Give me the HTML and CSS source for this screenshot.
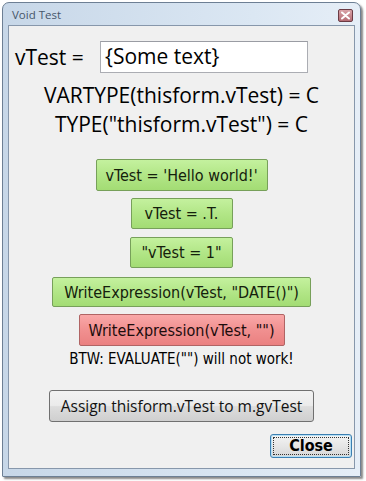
FILE: index.html
```html
<!DOCTYPE html>
<html>
<head>
<meta charset="utf-8">
<link rel="stylesheet" href="styles.css">
</head>
<body>
<div class="window">
  <div class="titlebar">
    <span class="title">Void Test</span>
    <span class="xbtn"><svg width="11" height="9" viewBox="0 0 11 9"><path d="M2 1.5 L9 7.5 M9 1.5 L2 7.5" stroke="#fff" stroke-width="2" stroke-linecap="round"/></svg></span>
  </div>
  <div class="client">
    <div class="row1">
      <span class="lbl">vTest =</span>
      <div class="textbox">{Some text}</div>
    </div>
    <div class="info first">VARTYPE(thisform.vTest) = C</div>
    <div class="info">TYPE("thisform.vTest") = C</div>
    <div class="btns">
      <button class="btn green b1">vTest = 'Hello world!'</button>
      <button class="btn green b2">vTest = .T.</button>
      <button class="btn green b3">"vTest = 1"</button>
      <button class="btn green b4">WriteExpression(vTest, "DATE()")</button>
      <button class="btn red b5">WriteExpression(vTest, "")</button>
    </div>
    <div class="note">BTW: EVALUATE("") will not work!</div>
    <button class="assign">Assign thisform.vTest to m.gvTest</button>
    <div class="closerow">
      <button class="close"><span class="focus">Close</span></button>
    </div>
  </div>
</div>
</body>
</html>
```
FILE: styles.css
```css
html, body {
  margin: 0;
  padding: 0;
  background: #ffffff;
}
body {
  width: 366px;
  height: 481px;
  overflow: hidden;
}
.window {
  margin: 2px 0 0 2px;
  width: 359px;
  height: 475px;
  border: 1px solid #6d7f94;
  border-radius: 7px 7px 1px 1px;
  background: linear-gradient(90deg, #c7d7e8 0%, #dbe7f3 70%, #e6eef7 100%);
  box-shadow: 2px 2px 2px rgba(40, 40, 40, 0.55);
  display: flex;
  flex-direction: column;
  padding: 0 5px 7px 5px;
  box-sizing: border-box;
}
.titlebar {
  height: 22px;
  display: flex;
  align-items: center;
  justify-content: space-between;
  flex: none;
}
.title {
  font-family: "Open Sans", "Noto Sans", sans-serif;
  font-size: 11.5px;
  color: #46566a;
  margin-left: 4px;
  margin-top: 1px;
}
.xbtn {
  width: 15px;
  height: 13px;
  border: 1px solid #6b3b44;
  border-radius: 2px;
  background: linear-gradient(#d9a3a8, #b56c74);
  display: flex;
  align-items: center;
  justify-content: center;
  margin-right: 2px;
  margin-top: 2px;
  box-sizing: border-box;
}
.client {
  flex: 1;
  background: #f0f0f0;
  border: 1px solid #8797ab;
  display: flex;
  flex-direction: column;
  align-items: center;
  color: #000;
}
.row1 {
  align-self: stretch;
  display: flex;
  align-items: center;
  margin-top: 15px;
  padding-left: 6px;
  height: 32px;
}
.lbl {
  font-family: "Open Sans", "Noto Sans", sans-serif;
  font-size: 21px;
  width: 85px;
}
.textbox {
  width: 208px;
  height: 32px;
  box-sizing: border-box;
  background: #fff;
  border: 1px solid #abadb3;
  border-top-color: #9a9ca3;
  font-family: "Open Sans", "Noto Sans", sans-serif;
  font-size: 21px;
  padding-left: 4px;
  line-height: 29px;
}
.info {
  font-family: "Open Sans", "Noto Sans", sans-serif;
  font-size: 21px;
  line-height: 29px;
}
.info.first {
  margin-top: 8px;
}
.btns {
  display: flex;
  flex-direction: column;
  align-items: center;
  margin-top: 20px;
}
.btn {
  font-family: "DejaVu Sans Condensed", "DejaVu Sans", sans-serif;
  font-size: 16px;
  color: #14200c;
  height: 32px;
  box-sizing: border-box;
  border-radius: 2px;
  padding: 0;
  margin: 0;
  white-space: nowrap;
}
.green {
  background: linear-gradient(#c4f19e 0%, #b2e687 50%, #a3dc74 100%);
  border: 1px solid #77a05a;
}
.red {
  background: linear-gradient(#f9a8a8 0%, #f19090 50%, #ea8080 100%);
  border: 1px solid #b06464;
  color: #1c0c0c;
}
.b1 { width: 172px; }
.b2 { width: 102px; height: 31px; margin-top: 7px; }
.b3 { width: 103px; height: 31px; margin-top: 8px; }
.b4 { width: 259px; height: 30px; margin-top: 9px; }
.b5 { width: 206px; margin-top: 7px; }
.note {
  font-family: "DejaVu Sans Condensed", "DejaVu Sans", sans-serif;
  font-size: 15px;
  margin-top: 3px;
  line-height: 20px;
}
.assign {
  margin-top: 21px;
  width: 265px;
  height: 32px;
  box-sizing: border-box;
  border: 1px solid #707070;
  border-radius: 3px;
  background: linear-gradient(#f2f2f2 0%, #ebebeb 48%, #dddddd 52%, #cfcfcf 100%);
  font-family: "Open Sans", "Noto Sans", sans-serif;
  font-size: 15.5px;
  color: #111;
  padding: 0;
  white-space: nowrap;
}
.closerow {
  align-self: stretch;
  display: flex;
  justify-content: flex-end;
  margin-top: 12px;
  padding-right: 2px;
}
.close {
  width: 82px;
  height: 24px;
  box-sizing: border-box;
  border: 1px solid #3c7fb1;
  border-radius: 3px;
  background: linear-gradient(#f4f4f4, #e6e6e6 50%, #d6d6d6);
  box-shadow: inset 0 0 0 1px #b6e0f6;
  padding: 2px;
  display: flex;
}
.focus {
  flex: 1;
  border: 1px dotted #333;
  font-family: "DejaVu Sans Condensed", "DejaVu Sans", sans-serif;
  font-weight: bold;
  font-size: 16px;
  line-height: 16px;
  color: #000;
  display: flex;
  align-items: center;
  justify-content: center;
}
```
